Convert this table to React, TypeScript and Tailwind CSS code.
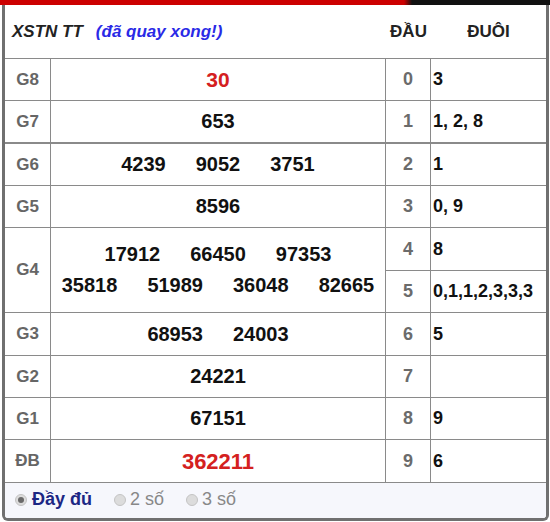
import React from 'react';

type Row = {
  label: string;
  nums: string[][];
  big?: 'g8' | 'db';
  span?: boolean;
  thick?: boolean;
};

const rows: Row[] = [
  { label: 'G8', nums: [['30']], big: 'g8' },
  { label: 'G7', nums: [['653']], thick: true },
  { label: 'G6', nums: [['4239', '9052', '3751']] },
  { label: 'G5', nums: [['8596']] },
  { label: 'G4', nums: [['17912', '66450', '97353'], ['35818', '51989', '36048', '82665']], span: true },
  { label: 'G3', nums: [['68953', '24003']] },
  { label: 'G2', nums: [['24221']] },
  { label: 'G1', nums: [['67151']] },
  { label: 'ĐB', nums: [['362211']], big: 'db' },
];

const tails = ['3', '1, 2, 8', '1', '0, 9', '8', '0,1,1,2,3,3,3', '5', '', '9', '6'];

const Radio = ({ checked }: { checked?: boolean }) => (
  <span className="w-[12px] h-[12px] rounded-full bg-[#dcdcdc] border border-[#c4c4c4] flex items-center justify-center shrink-0">
    {checked && <span className="w-[6px] h-[6px] rounded-full bg-[#6a6a6a]" />}
  </span>
);

export default function App() {
  const cell = 'border-b border-r border-[#8a8a8a] flex items-center';
  let dau = 0;

  return (
    <div className="w-[550px] h-[522px] bg-white font-['Liberation_Sans',Arial,sans-serif]">
      <div className="h-[5px] bg-[linear-gradient(to_right,#cc0000_404px,#111_412px)]" />
      <div className="ml-[2px] mr-[1px] border-x-[3px] border-b-[3px] border-[#707070] rounded-b-[6px] overflow-hidden">
        {/* header */}
        <div className="h-[54px] border-b border-[#8a8a8a] flex items-center">
          <div className="w-[381px] pl-[7px] italic font-bold text-[17px] text-[#222]">
            XSTN TT
            <span className="ml-[13px] text-[#2a2ae6]">(đã quay xong!)</span>
          </div>
          <div className="w-[45px] text-center text-[17px] font-bold text-[#222]">ĐẦU</div>
          <div className="w-[115px] text-center text-[17px] font-bold text-[#222]">ĐUÔI</div>
        </div>

        <div className="grid grid-cols-[46px_335px_45px_115px] grid-rows-[42px_43px_42px_42px_43px_42px_43px_42px_42px_43px]">
          {rows.map((r) => {
            const out: React.ReactNode[] = [];
            const bb = r.thick ? 'border-b-2' : '';
            const spanCls = r.span ? 'row-span-2' : '';
            out.push(
              <div key={r.label + 'l'} className={`${cell} ${bb} ${spanCls} justify-center text-[17px] font-bold text-[#666]`}>
                {r.label}
              </div>
            );
            out.push(
              <div key={r.label + 'n'} className={`${cell} ${bb} ${spanCls} flex-col justify-center`}>
                {r.nums.map((line, i) => (
                  <div key={i} className="flex justify-center gap-[30px] leading-[31px]">
                    {line.map((n) => (
                      <span
                        key={n}
                        className={
                          r.big === 'g8'
                            ? 'text-[21px] font-bold text-[#d42020]'
                            : r.big === 'db'
                            ? 'text-[22px] font-bold text-[#d42020]'
                            : 'text-[20px] font-bold text-[#111]'
                        }
                      >
                        {n}
                      </span>
                    ))}
                  </div>
                ))}
              </div>
            );
            const count = r.span ? 2 : 1;
            for (let k = 0; k < count; k++) {
              const d = dau++;
              out.push(
                <div key={'d' + d} className={`${cell} ${bb} justify-center text-[18px] font-bold text-[#6b6b6b]`}>
                  {d}
                </div>
              );
              out.push(
                <div key={'t' + d} className={`border-b border-[#8a8a8a] ${bb} flex items-center pl-[2px] text-[18px] font-bold text-[#111]`}>
                  {tails[d]}
                </div>
              );
            }
            return out;
          })}
        </div>

        {/* footer */}
        <div className="h-[35px] bg-[#f6f7fc] flex items-center pl-[10px] pb-[2px] text-[18px]">
          <div className="flex items-center gap-[5px]">
            <Radio checked />
            <span className="font-bold text-[#1c2784]">Đầy đủ</span>
          </div>
          <div className="flex items-center gap-[4px] ml-[22px]">
            <Radio />
            <span className="text-[#888]">2 số</span>
          </div>
          <div className="flex items-center gap-[4px] ml-[22px]">
            <Radio />
            <span className="text-[#888]">3 số</span>
          </div>
        </div>
      </div>
    </div>
  );
}
